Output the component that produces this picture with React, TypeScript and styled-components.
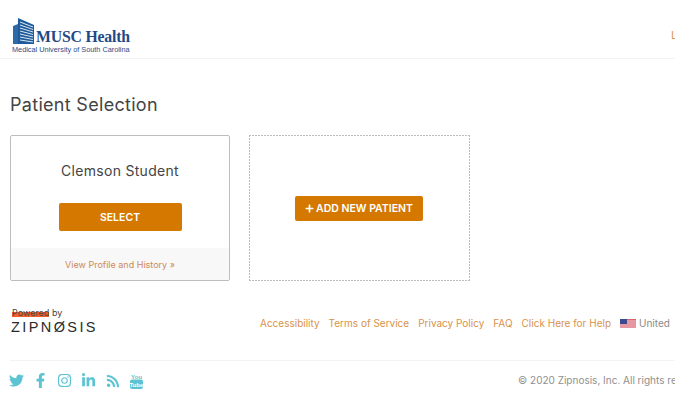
import React from "react";
import styled, { createGlobalStyle } from "styled-components";
import { FaTwitter, FaFacebookF, FaInstagram, FaLinkedinIn, FaRss, FaPlus } from "react-icons/fa";

const Global = createGlobalStyle`
  html, body { margin: 0; padding: 0; background: #fff; overflow: hidden; height: 400px; }
  body { font-family: "Inter", "Open Sans", "Liberation Sans", sans-serif; color: #444; }
`;

const Page = styled.div`
  width: 675px;
  height: 400px;
  overflow: hidden;
`;

const Header = styled.header`
  height: 59px;
  box-sizing: border-box;
  border-bottom: 1px solid #f3f3f3;
  padding: 17px 0 0 12px;
  display: flex;
  justify-content: space-between;
`;

const Logo = styled.div`
  display: grid;
  grid-template-columns: 24px auto;
  grid-template-rows: 27px auto;
  width: 125px;
  height: 36px;
`;

const LogoName = styled.div`
  font-family: "Liberation Serif", serif;
  font-size: 15.8px;
  font-weight: 700;
  color: #1f4a86;
  line-height: 15px;
  align-self: end;
  white-space: nowrap;
  letter-spacing: -0.2px;
`;

const LogoSub = styled.div`
  grid-column: 1 / 3;
  font-family: "Liberation Sans", sans-serif;
  font-size: 7.3px;
  line-height: 9px;
  color: #24508c;
  white-space: nowrap;
  margin-top: 1px;
`;

const HeaderLink = styled.a`
  font-size: 11px;
  color: #dd9a55;
  margin-top: 11px;
  width: 4px;
  overflow: hidden;
`;

const Main = styled.main`
  padding-left: 10px;
`;

const Title = styled.h1`
  margin: 35px 0 0;
  font-size: 18px;
  line-height: 22px;
  font-weight: 400;
  color: #444;
  letter-spacing: 0.3px;
`;

const Cards = styled.div`
  display: flex;
  gap: 19px;
  margin-top: 19px;
`;

const PatientCard = styled.section`
  width: 220px;
  height: 146px;
  box-sizing: border-box;
  border: 1px solid #bdbdbd;
  border-radius: 2px;
  display: flex;
  flex-direction: column;
  align-items: center;
`;

const PatientName = styled.div`
  font-size: 14px;
  line-height: 18px;
  margin-top: 26px;
  color: #444;
  letter-spacing: 0.3px;
`;

const PrimaryButton = styled.button<{ $w: number; $h: number }>`
  width: ${(p) => p.$w}px;
  height: ${(p) => p.$h}px;
  background: #d57800;
  color: #fff;
  border: 0;
  border-radius: 2px;
  font-family: inherit;
  font-size: 10.5px;
  font-weight: 600;
  display: flex;
  align-items: center;
  justify-content: center;
  gap: 2px;
  padding: 0;
  white-space: nowrap;
`;

const SelectButton = styled(PrimaryButton)`
  margin-top: 23px;
`;

const AddButton = styled(PrimaryButton)`
  margin-right: 1px;
`;

const CardFoot = styled.a`
  margin-top: auto;
  align-self: stretch;
  height: 32px;
  background: #f8f8f8;
  color: #cc8a55;
  font-size: 9px;
  display: flex;
  align-items: center;
  justify-content: center;
`;

const AddCard = styled.section`
  width: 221px;
  height: 146px;
  box-sizing: border-box;
  background:
    repeating-linear-gradient(90deg, #bdbdbd 0 2px, transparent 2px 3px) top / 100% 1px no-repeat,
    repeating-linear-gradient(90deg, #bdbdbd 0 2px, transparent 2px 3px) bottom / 100% 1px no-repeat,
    repeating-linear-gradient(0deg, #bdbdbd 0 2px, transparent 2px 3px) left / 1px 100% no-repeat,
    repeating-linear-gradient(0deg, #bdbdbd 0 2px, transparent 2px 3px) right / 1px 100% no-repeat;
  display: flex;
  align-items: center;
  justify-content: center;
`;

const FooterTop = styled.div`
  display: flex;
  margin-top: 27px;
  height: 36px;
  align-items: flex-start;
  white-space: nowrap;
`;

const Brand = styled.div`
  width: 240px;
  flex: none;
  display: flex;
  flex-direction: column;
`;

const Powered = styled.div`
  font-size: 9px;
  line-height: 10px;
  color: #444;
  padding-left: 2px;
`;

const Mark = styled.span`
  background: linear-gradient(transparent 50%, #f0602a 50%, #f0602a 95%, transparent 95%);
`;

const Wordmark = styled.div`
  font-family: "Liberation Sans", sans-serif;
  font-size: 14.5px;
  line-height: 15px;
  letter-spacing: 2.4px;
  color: #2b2b2b;
  margin: 2px 0 0 1px;
`;

const FooterLinks = styled.nav`
  display: flex;
  gap: 9px;
  margin: 8px 0 0 10px;
  font-size: 10px;
  line-height: 14px;
  color: #d9924a;
  align-items: center;
`;

const Locale = styled.span`
  color: #8a8a8a;
  display: flex;
  align-items: center;
  gap: 3px;
`;

const Rule = styled.hr`
  border: 0;
  border-top: 1px solid #f3f3f3;
  margin: 16px 0 0;
`;

const FooterBottom = styled.div`
  display: flex;
  justify-content: space-between;
  margin-top: 11px;
  white-space: nowrap;
`;

const Socials = styled.div`
  display: grid;
  grid-auto-flow: column;
  grid-auto-columns: 24px;
  justify-items: center;
  align-items: center;
  color: #5cc3d2;
  font-size: 15px;
  height: 17px;
  margin-left: -5.5px;
`;

const Copy = styled.div`
  font-size: 10px;
  line-height: 17px;
  color: #8f8f8f;
  margin-right: -37px;
`;

function Building() {
  return (
    <svg width="21" height="27" viewBox="0 0 21 27" style={{ marginLeft: 1 }}>
      <path d="M0 9 L5 7 L5 27 L0 27Z" fill="#2f6aa8" />
      <path d="M5 1 L21 8 L21 27 L5 27Z" fill="#1f5a9a" />
      <path
        d="M7 5 L20 10 M7 8 L20 12.5 M7 11 L20 15 M7 14 L20 17.5 M7 17 L20 20 M7 20 L20 22.5 M7 23 L20 25"
        stroke="#dbe8f4"
        strokeWidth="1"
      />
    </svg>
  );
}

function Flag() {
  return (
    <svg width="16" height="9" viewBox="0 0 16 9">
      <rect width="16" height="9" fill="#d9606e" />
      <path d="M0 2h16M0 4h16M0 6h16M0 8h16" stroke="#f5dfe0" strokeWidth="0.9" />
      <rect width="7" height="5" fill="#3b4a8c" />
    </svg>
  );
}

function YouTubeStack() {
  return (
    <svg width="13" height="16" viewBox="0 0 13 16">
      <text x="6.5" y="5.5" fontSize="6" fontWeight="700" fontFamily="Liberation Sans" textAnchor="middle" fill="#5cc3d2">You</text>
      <rect x="0" y="6.5" width="13" height="9.5" rx="2" fill="#5cc3d2" />
      <text x="6.5" y="13.5" fontSize="6" fontWeight="700" fontFamily="Liberation Sans" textAnchor="middle" fill="#fff">Tube</text>
    </svg>
  );
}

export default function App() {
  return (
    <Page>
      <Global />
      <Header>
        <Logo>
          <Building />
          <LogoName>MUSC Health</LogoName>
          <LogoSub>Medical University of South Carolina</LogoSub>
        </Logo>
        <HeaderLink>L</HeaderLink>
      </Header>
      <Main>
        <Title>Patient Selection</Title>
        <Cards>
          <PatientCard>
            <PatientName>Clemson Student</PatientName>
            <SelectButton $w={123} $h={28}>SELECT</SelectButton>
            <CardFoot>View Profile and History »</CardFoot>
          </PatientCard>
          <AddCard>
            <AddButton $w={128} $h={25}>
              <FaPlus size={9} />
              ADD NEW PATIENT
            </AddButton>
          </AddCard>
        </Cards>
        <FooterTop>
          <Brand>
            <Powered><Mark>Powered</Mark> by</Powered>
            <Wordmark>ZIPNØSIS</Wordmark>
          </Brand>
          <FooterLinks>
            <span>Accessibility</span>
            <span>Terms of Service</span>
            <span>Privacy Policy</span>
            <span>FAQ</span>
            <span>Click Here for Help</span>
            <Locale><Flag />United</Locale>
          </FooterLinks>
        </FooterTop>
        <Rule />
        <FooterBottom>
          <Socials>
            <FaTwitter />
            <FaFacebookF />
            <FaInstagram />
            <FaLinkedinIn />
            <FaRss size={14} />
            <YouTubeStack />
          </Socials>
          <Copy>© 2020 Zipnosis, Inc. All rights reserved.</Copy>
        </FooterBottom>
      </Main>
    </Page>
  );
}
